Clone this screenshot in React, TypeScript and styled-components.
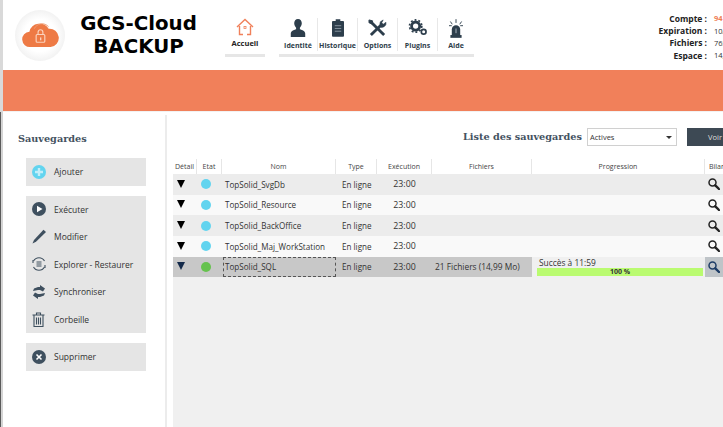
import React from "react";
import styled, { createGlobalStyle } from "styled-components";

const Global = createGlobalStyle`
  html, body { margin: 0; padding: 0; background: #fff; overflow: hidden; }
  * { box-sizing: border-box; }
`;
const Font = `"Open Sans", "Noto Sans", sans-serif`;

const Page = styled.div`
  width: 723px; height: 427px; overflow: hidden; padding-left: 3px;
  background: linear-gradient(to bottom, #d9d9d9 0 112px, transparent 112px),
    linear-gradient(to right, #5a5a5a 0 1px, #d4d4d4 1px 3px, #fff 3px);
  display: flex; flex-direction: column;
  font-family: ${Font}; color: #333;
`;
const Header = styled.header`
  height: 70px; flex: none; display: flex; background: #fff; overflow: hidden;
`;
const LogoDisc = styled.div`
  width: 50px; height: 51px; margin: 10px 0 0 12px; border-radius: 50%; flex: none;
  background: radial-gradient(circle at 50% 50%, #fff 45%, #e4e4e4 100%);
  display: flex; align-items: center; justify-content: center;
`;
const Brand = styled.div`
  width: 147px; padding-top: 12px; flex: none; text-align: center;
  font-family: "DejaVu Sans", sans-serif; font-weight: 700; font-size: 19.8px; line-height: 23px; color: #000;
`;
const HomeTab = styled.div`
  width: 40px; margin-left: 13px; flex: none; display: flex; flex-direction: column; align-items: center; padding-top: 18px;
`;
const HomeLabel = styled.div`font-size: 7.5px; font-weight: 700; color: #222; line-height: 11px; margin-top: 2px;`;
const Underline = styled.div`height: 3px; background: #e6e6e6; margin-top: 5px; align-self: stretch;`;
const Tabs = styled.div`
  margin-left: 14px; width: 195px; flex: none; padding-top: 18px; display: flex; flex-direction: column;
`;
const TabRow = styled.div`display: grid; grid-template-columns: 38px 40px 40px 40px 37px; height: 33px;`;
const Tab = styled.div`
  display: flex; flex-direction: column; align-items: center; justify-content: space-between; padding-top: 1px;
  border-left: 1px solid #e8e8e8;
  &:first-child { border-left: none; }
`;
const TabLabel = styled.div`font-size: 7px; font-weight: 700; color: #2e3d4a; line-height: 10px; white-space: nowrap;`;
const TabLine = styled.div`height: 3px; background: #e6e6e6; margin-top: 3px;`;
const Account = styled.div`
  margin-left: auto; width: 67px; flex: none; padding-top: 12px; overflow: hidden;
`;
const AccRow = styled.div`display: flex; height: 12.4px; align-items: center; white-space: nowrap;`;
const AccKey = styled.div`
  width: 51px; margin-right: 7px; flex: none; text-align: right; font-size: 8.5px; font-weight: 700; color: #222;
`;
const AccVal = styled.div<{ $accent?: boolean }>`
  font-size: 7.5px; font-weight: ${p => (p.$accent ? 700 : 400)}; color: ${p => (p.$accent ? "#ef7d55" : "#333")};
`;
const Banner = styled.div`height: 42px; flex: none; background: #f1805a;`;
const Body = styled.div`flex: 1; display: flex; min-height: 0; padding-top: 3px; background: #fff; border-top: 1px solid #f2f2f2; margin-top: -1px;`;
const Side = styled.aside`
  width: 164px; flex: none; border-right: 2px solid #ececec; padding: 16px 0 0 15px; display: flex; flex-direction: column;
`;
const SideTitle = styled.div`
  font-family: "DejaVu Serif", "Liberation Serif", serif; font-weight: 700; font-size: 9.7px; color: #44525f; height: 15px; line-height: 15px; margin-bottom: 12px;
`;
const Group = styled.div`
  width: 120px; margin: 0 0 10px 8px; background: #e5e5e5; display: flex; flex-direction: column;
`;
const Item = styled.div`height: 27.5px; display: flex; align-items: center; font-size: 8.5px; color: #333;`;
const ItemIcon = styled.div`width: 28px; flex: none; padding-left: 6px; display: flex; align-items: center;`;
const Main = styled.main`flex: 1; min-width: 0; padding-left: 6px; display: flex; flex-direction: column;`;
const Toolbar = styled.div`height: 44px; flex: none; display: flex; align-items: flex-start; padding-top: 13px; overflow: hidden;`;
const ListTitle = styled.div`
  margin-left: 290px; width: 124px; flex: none; font-family: "DejaVu Serif", "Liberation Serif", serif; font-weight: 700; font-size: 9.7px; color: #44525f; line-height: 18px; white-space: nowrap;
`;
const Select = styled.div`
  width: 90px; height: 18px; flex: none; border: 1px solid #d0d0d0; background: #fff; display: flex; align-items: center; justify-content: space-between; padding: 0 4px 0 2px; font-size: 7.5px; color: #333;
`;
const Caret = styled.div`width: 0; height: 0; border: 3px solid transparent; border-top: 3px solid #333; border-bottom: none;`;
const Voir = styled.div`
  margin-left: 10px; width: 50px; height: 18px; flex: none; background: #3d4954; color: #ddd; font-size: 7.5px; display: flex; align-items: center; padding-left: 21px;
`;
const Table = styled.div`flex: 1; background: #f0f0f0; display: flex; flex-direction: column; overflow: hidden;`;
const cols = "24px 25px 114px 41px 55px 100px 173px 1fr";
const HeadRow = styled.div`
  display: grid; grid-template-columns: ${cols}; height: 15px; background: #fff; flex: none;
`;
const HeadCell = styled.div`
  font-size: 7px; color: #444; text-align: center; line-height: 16px; border-right: 1px solid #e6e6e6; white-space: nowrap; overflow: hidden;
  &:last-child { border-right: none; text-align: left; padding-left: 4px; }
`;
const Row = styled.div<{ $bg: string }>`
  display: grid; grid-template-columns: ${cols}; height: 20.67px; background: ${p => p.$bg}; flex: none; align-items: center; font-size: 8.1px; color: #333;
`;
const Arrow = styled.div<{ $c: string }>`
  width: 0; height: 0; justify-self: start; margin: -1px 0 0 4px; border-left: 4.5px solid transparent; border-right: 4.5px solid transparent; border-top: 8px solid ${p => p.$c};
`;
const Dot = styled.div<{ $c: string }>`width: 10px; height: 10px; border-radius: 50%; background: ${p => p.$c}; justify-self: start; margin-left: 4px;`;
const Name = styled.div<{ $focus?: boolean }>`
  height: 100%; display: flex; align-items: center; padding-left: 2px; margin-left: 1px; white-space: nowrap;
  ${p => (p.$focus ? "border: 1px dashed #555; padding-left: 1px;" : "")}
`;
const Center = styled.div`text-align: center; white-space: nowrap; font-size: 8.8px;`;
const Plain = styled.div`padding-left: 6px; white-space: nowrap;`;
const FileCount = styled.div`padding-left: 3px; white-space: nowrap; font-size: 8.4px;`;
const Prog = styled.div`height: 100%; background: #f0f0f0; padding: 0 2px 1px 5px; display: flex; flex-direction: column; justify-content: flex-end;`;
const ProgText = styled.div`font-size: 8.4px; line-height: 11px; padding-left: 2px;`;
const Bar = styled.div`height: 8px; background: #bafb70; font-size: 7px; font-weight: 700; text-align: center; line-height: 8px;`;
const Lens = styled.div<{ $sel?: boolean }>`
  height: 100%; display: flex; align-items: center; padding-left: 3px; background: ${p => (p.$sel ? "#bfc4c8" : "transparent")};
`;

const Cloud = () => (
  <svg width={38} height={25} viewBox="0 0 38 26">
    <path d="M9 25a8 8 0 0 1-1-16 11 11 0 0 1 20-3 9 9 0 0 1 2 19z" fill="#ee7a45" />
    <path d="M13 6a9 9 0 0 1 15-2" fill="none" stroke="#ee9a70" strokeWidth="1" />
    <rect x="15" y="12" width="9" height="8" rx="1" fill="none" stroke="#fbd3bd" strokeWidth="1.2" />
    <path d="M17 12V9.500a2.500 2.500 0 0 1 5 0V12" fill="none" stroke="#fbd3bd" strokeWidth="1.2" />
    <rect x="19" y="15" width="1.400" height="3" fill="#fbd3bd" />
  </svg>
);
const HomeIcon = () => (
  <svg width={18} height={18} viewBox="0 0 18 18" fill="none" stroke="#f0805a" strokeWidth="1.4">
    <path d="M1 9 9 1.500 17 9" />
    <path d="M3.500 8v8.500h3.500M14.500 8v8.500H11" />
    <rect x="8" y="8.500" width="2" height="2" strokeWidth=".8" />
  </svg>
);
const Person = () => (
  <svg width={16} height={19} viewBox="0 0 16 20" fill="#2d3e4c">
    <path d="M8 0c2.600 0 4 2 4 4.600 0 2-1 3.600-2 4.600v1.600c2.500 1 5.600 1.800 5.600 4.500V19H.4v-3.700c0-2.700 3.100-3.500 5.600-4.500V9.200c-1-1-2-2.600-2-4.600C4 2 5.400 0 8 0z" />
  </svg>
);
const Clip = () => (
  <svg width={12} height={18} viewBox="0 0 13 19" fill="#2d3e4c">
    <path d="M4 0h5v2h3a1 1 0 0 1 1 1v15a1 1 0 0 1-1 1H1a1 1 0 0 1-1-1V3a1 1 0 0 1 1-1h3z" />
    <path d="M3 7h7M3 10h7M3 13h7" stroke="#8b98a3" strokeWidth="1" />
  </svg>
);
const Tools = () => (
  <svg width={19} height={18} viewBox="0 0 20 19" fill="none" stroke="#2d3e4c">
    <path d="M2 2l15 15" strokeWidth="3" />
    <path d="M1 1l4 1-1 3-3-1z" fill="#2d3e4c" strokeWidth="1" />
    <path d="M3 17 13 7" strokeWidth="3" />
    <path d="M19 3.500a4.500 4.500 0 0 1-7 4.500l1-5 3-2-1.500 3 1.500 1.500z" fill="#2d3e4c" strokeWidth=".6" />
  </svg>
);
const Gears = () => (
  <svg width={20} height={17} viewBox="0 0 20 18" fill="none" stroke="#2d3e4c">
    <circle cx="7.500" cy="7.500" r="4.300" strokeWidth="3" />
    <circle cx="7.500" cy="7.500" r="6.500" strokeWidth="1.800" strokeDasharray="2 2.100" />
    <circle cx="16" cy="13.500" r="2.500" strokeWidth="1.800" />
  </svg>
);
const Siren = () => (
  <svg width={14} height={19} viewBox="0 0 15 20" fill="#2d3e4c">
    <path d="M3 19V11a4.500 4.500 0 0 1 9 0v8z" />
    <rect x="1.500" y="17" width="12" height="3" />
    <path d="M7.500 0v4M1.500 2.500l2 3M13.500 2.500l-2 3M0 7h3M12 7h3" stroke="#2d3e4c" strokeWidth="1" />
    <rect x="6.800" y="10" width="1.400" height="5" fill="#8b98a3" />
  </svg>
);
const Plus = () => (
  <svg width={14} height={14} viewBox="0 0 14 14">
    <circle cx="7" cy="7" r="7" fill="#62d4ef" />
    <path d="M7 3v8M3 7h8" stroke="#c3eef9" strokeWidth="2.400" />
  </svg>
);
const Play = () => (
  <svg width={14} height={14} viewBox="0 0 14 14">
    <circle cx="7" cy="7" r="7" fill="#3f505f" />
    <path d="M5 3.800v6.400L10.500 7z" fill="#fff" />
  </svg>
);
const Pencil = () => (
  <svg width={15} height={15} viewBox="0 0 15 15" fill="#3f505f">
    <path d="M11.500.8 14 3 4 12.800.5 14.500 2 11z" />
  </svg>
);
const Explore = () => (
  <svg width={14} height={14} viewBox="0 0 14 14" fill="none" stroke="#3f505f">
    <path d="M1.500 4A6.300 6.300 0 0 1 12.500 4M12.500 10A6.300 6.300 0 0 1 1.500 10" strokeWidth="1.100" />
    <path d="M1 3v3M13 8v3" strokeWidth="1.100" />
    <path d="M4.500 5h5M4.500 7h5M4.500 9h5" strokeWidth="1" />
  </svg>
);
const Sync = () => (
  <svg width={14} height={14} viewBox="0 0 14 14" fill="#3f505f">
    <path d="M1 6 2 3.500 6 2h2V0l5 3.500-2 3-3-1.500H6z" />
    <path d="M13 8 12 10.500 8 12H6v2L1 10.500l2-3 3 1.500h2z" />
  </svg>
);
const Trash = () => (
  <svg width={13} height={15} viewBox="0 0 13 15" fill="none" stroke="#3f505f" strokeWidth="1.100">
    <path d="M.5 3h12M4.500 3V1h4v2M2 3v11.500h9V3" />
    <path d="M4.500 5.500v7M6.500 5.500v7M8.500 5.500v7" />
  </svg>
);
const Cross = () => (
  <svg width={14} height={14} viewBox="0 0 14 14">
    <circle cx="7" cy="7" r="7" fill="#3f505f" />
    <path d="M4.500 4.500l5 5M9.500 4.500l-5 5" stroke="#fff" strokeWidth="1.600" />
  </svg>
);
const Magnifier = ({ c }: { c: string }) => (
  <svg width={12} height={12} viewBox="0 0 12 12" fill="none" stroke={c}>
    <circle cx="4.500" cy="4.500" r="3.500" strokeWidth="1.500" />
    <path d="M7.300 7.300 11 11" strokeWidth="2.400" strokeLinecap="round" />
  </svg>
);

const rows = ["TopSolid_SvgDb", "TopSolid_Resource", "TopSolid_BackOffice", "TopSolid_Maj_WorkStation"];
const heads = ["Détail", "Etat", "Nom", "Type", "Exécution", "Fichiers", "Progression", "Bilan"];

export default function App() {
  return (
    <Page>
      <Global />
      <Header>
        <LogoDisc><Cloud /></LogoDisc>
        <Brand>GCS-Cloud<br />BACKUP</Brand>
        <HomeTab>
          <HomeIcon />
          <HomeLabel>Accueil</HomeLabel>
          <Underline />
        </HomeTab>
        <Tabs>
          <TabRow>
            <Tab><Person /><TabLabel>Identité</TabLabel></Tab>
            <Tab><Clip /><TabLabel>Historique</TabLabel></Tab>
            <Tab><Tools /><TabLabel>Options</TabLabel></Tab>
            <Tab><Gears /><TabLabel>Plugins</TabLabel></Tab>
            <Tab><Siren /><TabLabel>Aide</TabLabel></Tab>
          </TabRow>
          <TabLine />
        </Tabs>
        <Account>
          <AccRow><AccKey>Compte :</AccKey><AccVal $accent>94</AccVal></AccRow>
          <AccRow><AccKey>Expiration :</AccKey><AccVal>10/</AccVal></AccRow>
          <AccRow><AccKey>Fichiers :</AccKey><AccVal>765</AccVal></AccRow>
          <AccRow><AccKey>Espace :</AccKey><AccVal>14,</AccVal></AccRow>
        </Account>
      </Header>
      <Banner />
      <Body>
        <Side>
          <SideTitle>Sauvegardes</SideTitle>
          <Group>
            <Item><ItemIcon><Plus /></ItemIcon>Ajouter</Item>
          </Group>
          <Group>
            <Item><ItemIcon><Play /></ItemIcon>Exécuter</Item>
            <Item><ItemIcon><Pencil /></ItemIcon>Modifier</Item>
            <Item><ItemIcon><Explore /></ItemIcon>Explorer - Restaurer</Item>
            <Item><ItemIcon><Sync /></ItemIcon>Synchroniser</Item>
            <Item><ItemIcon><Trash /></ItemIcon>Corbeille</Item>
          </Group>
          <Group>
            <Item><ItemIcon><Cross /></ItemIcon>Supprimer</Item>
          </Group>
        </Side>
        <Main>
          <Toolbar>
            <ListTitle>Liste des sauvegardes</ListTitle>
            <Select>Actives<Caret /></Select>
            <Voir>Voir</Voir>
          </Toolbar>
          <Table>
            <HeadRow>{heads.map(h => <HeadCell key={h}>{h}</HeadCell>)}</HeadRow>
            {rows.map((n, i) => (
              <Row key={n} $bg={i % 2 ? "#f9f9f9" : "#ececec"}>
                <Arrow $c="#000" />
                <Dot $c="#62d4ef" />
                <Name>{n}</Name>
                <Plain>En ligne</Plain>
                <Center>23:00</Center>
                <span /><span />
                <Lens><Magnifier c="#222" /></Lens>
              </Row>
            ))}
            <Row $bg="#c8c8c8">
              <Arrow $c="#142a4a" />
              <Dot $c="#66c24e" />
              <Name $focus>TopSolid_SQL</Name>
              <Plain>En ligne</Plain>
              <Center>23:00</Center>
              <FileCount>21 Fichiers (14,99 Mo)</FileCount>
              <Prog>
                <ProgText>Succès à 11:59</ProgText>
                <Bar>100 %</Bar>
              </Prog>
              <Lens $sel><Magnifier c="#1d3c66" /></Lens>
            </Row>
          </Table>
        </Main>
      </Body>
    </Page>
  );
}
